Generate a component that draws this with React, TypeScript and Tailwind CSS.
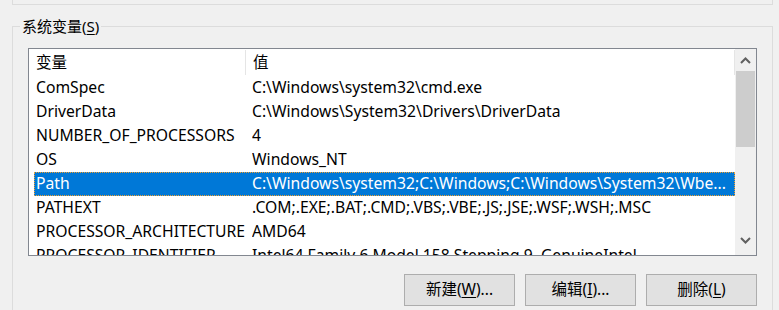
import React from "react";

const rows: [string, string][] = [
  ["ComSpec", "C:\\Windows\\system32\\cmd.exe"],
  ["DriverData", "C:\\Windows\\System32\\Drivers\\DriverData"],
  ["NUMBER_OF_PROCESSORS", "4"],
  ["OS", "Windows_NT"],
  ["Path", "C:\\Windows\\system32;C:\\Windows;C:\\Windows\\System32\\Wbe..."],
  ["PATHEXT", ".COM;.EXE;.BAT;.CMD;.VBS;.VBE;.JS;.JSE;.WSF;.WSH;.MSC"],
  ["PROCESSOR_ARCHITECTURE", "AMD64"],
  ["PROCESSOR_IDENTIFIER", "Intel64 Family 6 Model 158 Stepping 9, GenuineIntel"],
];

const font = { fontFamily: '"Noto Sans", "Noto Sans CJK SC", sans-serif' };

function Btn({ children }: { children: React.ReactNode }) {
  return (
    <div className="w-[111px] h-[32px] bg-[#e1e1e1] border border-[#adadad] flex items-center justify-center text-[15.5px] text-black leading-none">
      {children}
    </div>
  );
}

export default function App() {
  return (
    <div
      className="w-[779px] h-[310px] bg-[#f0f0f0] overflow-hidden flex flex-col"
      style={font}
    >
      <div className="h-[5px] ml-[12px] w-[761px] border-l border-r border-b border-[#dcdcdc]" />
      <div className="relative mt-[21px] ml-[12px] w-[761px] flex-1 border-l border-r border-t border-[#dcdcdc] pl-[15px] pr-[15px] pt-[21px]">
        <div className="absolute left-[7px] top-[-11px] px-[2px] bg-[#f0f0f0] text-[15px] leading-[20px] text-black">
          系统变量(<span className="underline underline-offset-2">S</span>)
        </div>
        <div className="h-[208px] border border-[#828790] bg-white flex overflow-hidden">
          <div className="flex-1 flex flex-col overflow-hidden">
            <div className="h-[27px] shrink-0 flex text-[15.5px] text-black">
              <div className="w-[217px] shrink-0 pl-[7px] flex items-center border-r border-[#e5e5e5] my-[1px]">
                变量
              </div>
              <div className="flex-1 pl-[7px] flex items-center border-r border-[#e5e5e5] my-[1px]">
                值
              </div>
            </div>
            {rows.map(([n, v], i) => {
              const sel = n === "Path";
              return (
                <div
                  key={i}
                  className={
                    "h-[24px] shrink-0 ml-[5px] flex items-center text-[15.7px] whitespace-nowrap " +
                    (sel
                      ? "bg-[#0078d7] text-white outline outline-1 outline-dotted outline-[#f0a030] -outline-offset-1"
                      : "text-black")
                  }
                >
                  <div className="w-[218px] shrink-0 pl-[2px] overflow-hidden">{n}</div>
                  <div className="flex-1 overflow-hidden">{v}</div>
                </div>
              );
            })}
          </div>
          <div className="w-[21px] shrink-0 bg-[#f0f0f0] flex flex-col">
            <div className="h-[22px] flex items-center justify-center">
              <svg width="11" height="7" viewBox="0 0 11 7">
                <polyline points="1,6 5.5,1.5 10,6" fill="none" stroke="#606060" strokeWidth="2" />
              </svg>
            </div>
            <div className="h-[76px] bg-[#cdcdcd] mx-[1px]" />
            <div className="flex-1" />
            <div className="h-[22px] flex items-center justify-center mb-[4px]">
              <svg width="11" height="7" viewBox="0 0 11 7">
                <polyline points="1,1 5.5,5.5 10,1" fill="none" stroke="#606060" strokeWidth="2" />
              </svg>
            </div>
          </div>
        </div>
        <div className="mt-[18px] flex justify-end gap-[10px]">
          <Btn>
            新建(<span className="underline underline-offset-2">W</span>)...
          </Btn>
          <Btn>
            编辑(<span className="underline underline-offset-2">I</span>)...
          </Btn>
          <Btn>
            删除(<span className="underline underline-offset-2">L</span>)
          </Btn>
        </div>
      </div>
    </div>
  );
}
